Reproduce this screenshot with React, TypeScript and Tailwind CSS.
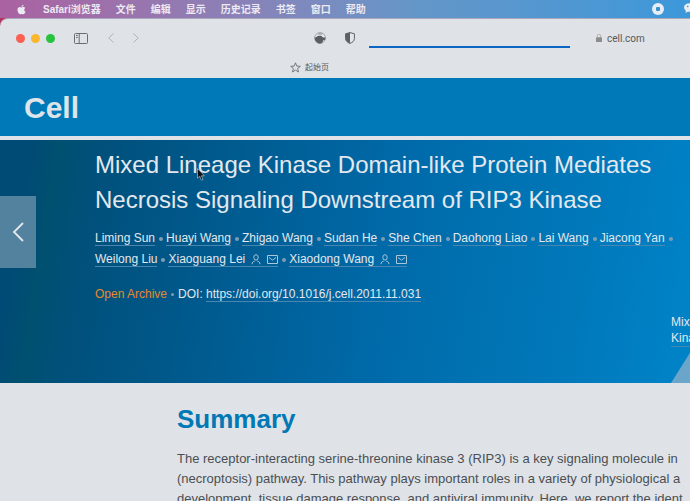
import { FaApple } from 'react-icons/fa';

interface Author {
  name: string;
  corresponding?: boolean;
}

const menus = ['文件', '编辑', '显示', '历史记录', '书签', '窗口', '帮助'];

const firstRow: Author[] = [
  { name: 'Liming Sun' },
  { name: 'Huayi Wang' },
  { name: 'Zhigao Wang' },
  { name: 'Sudan He' },
  { name: 'She Chen' },
  { name: 'Daohong Liao' },
  { name: 'Lai Wang' },
  { name: 'Jiacong Yan' },
];

const secondRow: Author[] = [
  { name: 'Weilong Liu' },
  { name: 'Xiaoguang Lei', corresponding: true },
  { name: 'Xiaodong Wang', corresponding: true },
];

function Dot() {
  return <span className="size-1 shrink-0 rounded-full bg-[#7d9db4]" />;
}

function PersonIcon() {
  return (
    <svg viewBox="0 0 10 11" className="h-[11px] w-[10px]" fill="none" stroke="#a9c6da" strokeWidth="1">
      <ellipse cx="5" cy="3.4" rx="2.2" ry="2.7" />
      <path d="M1 10.2c.1-2 1.2-2.7 2.8-3.2M9 10.2c-.1-2-1.2-2.7-2.8-3.2" />
    </svg>
  );
}

function MailIcon() {
  return (
    <svg viewBox="0 0 11 9" className="h-[9px] w-[11px]" fill="none" stroke="#a9c6da" strokeWidth="1">
      <path d="M.5.5h10v8H.5zM2 2.5l3.5 2.6L9 2.5" />
    </svg>
  );
}

function AuthorLink({ author }: { author: Author }) {
  return (
    <a href="#author" className="flex h-[15px] items-center gap-[6px] border-b border-[#4686b0] whitespace-nowrap">
      {author.name}
      {author.corresponding && (
        <>
          <PersonIcon />
          <MailIcon />
        </>
      )}
    </a>
  );
}

function MenuBar() {
  return (
    <nav className="flex h-[18px] items-center bg-linear-to-r from-[#aa61a1] via-[#6496c8] via-60% to-[#3b98da] pl-4 text-[10px] font-bold text-[#eceaf3]">
      <FaApple className="mr-4 size-[11px] shrink-0" />
      <button className="mr-[15px] shrink-0">Safari浏览器</button>
      <div className="flex shrink-0 gap-[15px]">
        {menus.map((m) => (
          <button key={m} className="whitespace-nowrap">{m}</button>
        ))}
      </div>
      <div className="ml-auto -mr-2 flex shrink-0 items-center gap-5">
        <svg viewBox="0 0 12 12" className="size-3">
          <circle cx="6" cy="6" r="6" fill="#e8edf3" />
          <rect x="4" y="4" width="4" height="4" rx="1" fill="#3392cc" />
        </svg>
        <svg viewBox="0 0 14 12" className="h-3 w-[14px]" fill="#e8edf3">
          <ellipse cx="5.5" cy="4.5" rx="5.5" ry="4.2" />
          <path d="M2 7l-.5 3L5 8z" />
          <ellipse cx="10" cy="7.5" rx="4" ry="3.3" />
          <circle cx="3.7" cy="3.5" r=".8" fill="#3392cc" />
          <circle cx="7.2" cy="3.5" r=".8" fill="#3392cc" />
        </svg>
      </div>
    </nav>
  );
}

function Toolbar() {
  return (
    <div className="bg-linear-to-r from-[#b5345f] from-2% via-[#c0798e] via-30% to-[#5ba3c4]">
      <div className="rounded-tl-lg border-t border-[#a9a6bd] bg-[#dfe2e7] text-[#55595d]">
        <div className="flex h-[38px] items-center pl-4">
          <div className="flex gap-[6px]">
            <span className="size-[9px] rounded-full bg-[#fa6152]" />
            <span className="size-[9px] rounded-full bg-[#fbb62e]" />
            <span className="size-[9px] rounded-full bg-[#27c33f]" />
          </div>
          <button aria-label="Sidebar" className="ml-[19px]">
            <svg viewBox="0 0 14 11" className="h-[11px] w-[14px]" fill="none" stroke="#696d72" strokeWidth="1">
              <rect x=".5" y=".5" width="13" height="10" rx="1" />
              <path d="M5.2.5v10M2 2.5h1.7M2 4.5h1.7" />
            </svg>
          </button>
          <button aria-label="Back" className="ml-5">
            <svg viewBox="0 0 6 10" className="h-[10px] w-[6px]" fill="none" stroke="#afb2b6">
              <path d="M5.5.5L.8 5l4.7 4.5" />
            </svg>
          </button>
          <button aria-label="Forward" className="ml-[19px]">
            <svg viewBox="0 0 6 10" className="h-[10px] w-[6px]" fill="none" stroke="#afb2b6">
              <path d="M.5.5L5.2 5 .5 9.5" />
            </svg>
          </button>
          <button aria-label="Extension" className="ml-[175px]">
            <svg viewBox="0 0 12 12" className="size-3">
              <circle cx="6" cy="6" r="5.4" fill="#e8e9eb" stroke="#92969a" strokeWidth=".8" />
              <path d="M.8 5.5C2.2 5.6 3 4 5 3.8c1.8-.2 3 .2 3.5 1.4l3 .5c0 2.3-1.2 2.8-2.4 2.6C9 10 8 11.5 6 11.5 3 11.5.6 9 .8 5.5z" fill="#5b5e61" />
              <path d="M3 2.5L5.5 1l4 .6-2 1.2z" fill="#a2a5a9" />
            </svg>
          </button>
          <button aria-label="Privacy report" className="ml-[19px]">
            <svg viewBox="0 0 10 12" className="h-3 w-[10px]">
              <path d="M5 .6l4.4 1.2v4.7C9.4 9 7.5 10.4 5 11.4 2.5 10.4.6 9 .6 6.5V1.8z" fill="#e4e6e8" stroke="#5d6165" />
              <path d="M5 .6v10.8C2.5 10.4.6 9 .6 6.5V1.8z" fill="#5d6165" />
            </svg>
          </button>
          <div className="ml-[14px] h-5 w-[201px] shrink-0 border-b-2 border-[#0a66c2]" />
          <label className="ml-[26px] flex items-center gap-[5px] text-[10px]">
            <svg viewBox="0 0 6 8" className="h-2 w-[6px]" aria-hidden="true">
              <rect y="3.2" width="6" height="4.8" rx=".6" fill="#8c8c8d" />
              <path d="M1.3 3.5V2a1.7 1.7 0 013.4 0v1.5" fill="none" stroke="#aaa3a5" strokeWidth=".8" />
            </svg>
            <input
              aria-label="Address"
              defaultValue="cell.com"
              className="w-16 min-w-0 font-['Roboto',sans-serif] outline-none"
            />
          </label>
        </div>
        <div className="flex h-[21px] items-center justify-center pr-[71px]">
          <button className="flex items-center gap-1 text-[8px]">
            <svg viewBox="0 0 11 11" className="size-[11px]" fill="none" stroke="#6b6e72" strokeWidth=".9">
              <path d="M5.5.8l1.3 3.3 3.5.2-2.7 2.2.9 3.5-3-1.9-3 1.9.9-3.5L.7 4.3l3.5-.2z" />
            </svg>
            起始页
          </button>
        </div>
      </div>
    </div>
  );
}

function Hero() {
  return (
    <section className="relative flex h-[243px] bg-[linear-gradient(99deg,#004a76_4%,#005070_8%,#00507a_13%,#00588a_28%,#00619a_42%,#006aa9_56%,#0072b2_70%,#0079bb_83%,#0082c6_97%)] text-[#e3e8ee]">
      <button aria-label="Previous article" className="mt-14 flex h-[72px] w-9 shrink-0 items-center justify-center bg-[#53829e]">
        <svg viewBox="0 0 12 20" className="h-5 w-3" fill="none" stroke="#e3e8ee" strokeWidth="1.8">
          <path d="M11 1L2 10l9 9" />
        </svg>
      </button>
      <div className="ml-[59px] w-[576px] shrink-0 pt-[7px] text-[12px]">
        <h1 className="text-[24px] leading-[35px] whitespace-nowrap">
          Mixed Lineage Kinase Domain-like Protein Mediates
          <br />
          Necrosis Signaling Downstream of RIP3 Kinase
        </h1>
        <div className="mt-[14px] flex flex-col gap-[6px]">
          <div className="flex items-center gap-[3px]">
            {firstRow.map((a) => (
              <div key={a.name} className="flex items-center gap-1">
                <AuthorLink author={a} />
                <Dot />
              </div>
            ))}
          </div>
          <div className="flex items-center gap-1">
            {secondRow.map((a, i) => (
              <div key={a.name} className="flex items-center gap-[3px]">
                {i > 0 && <Dot />}
                <AuthorLink author={a} />
              </div>
            ))}
          </div>
        </div>
        <div className="mt-[18px] flex items-center">
          <span className="text-[#e5892c]">Open Archive</span>
          <span className="mx-1 size-[3px] rounded-full bg-[#7d9db4]" />
          <span>DOI:&nbsp;</span>
          <a href="https://doi.org/10.1016/j.cell.2011.11.031" className="flex h-[15px] items-center border-b border-[#4686b0]">
            https://doi.org/10.1016/j.cell.2011.11.031
          </a>
        </div>
      </div>
      <aside className="flex min-w-0 flex-1 flex-col justify-end overflow-hidden text-[12px] leading-4">
        <a href="#next" className="w-24 border-b border-[#4686b0]">
          Mixed Lineage Kinase
        </a>
        <svg viewBox="0 0 96 36" className="h-9 w-24" fill="#6ba5c9">
          <path d="M0 36L22 1v35z" />
          <path d="M22 1h74v35H22z" />
        </svg>
      </aside>
      <svg viewBox="0 0 8 13" className="absolute top-7 left-[197px] h-[13px] w-2" fill="#0b0f14" stroke="#c9d3da" strokeWidth=".6">
        <path d="M.5.5v9.7l2.2-2 1.6 4 1.7-.7-1.6-3.7h3z" />
      </svg>
    </section>
  );
}

export default function App() {
  return (
    <div className="min-h-screen overflow-hidden bg-[#dfe2e7] font-['Liberation_Sans','Noto_Sans_CJK_SC',sans-serif]">
      <MenuBar />
      <Toolbar />
      <header className="flex h-[58px] items-center bg-[#0079b8] pl-6">
        <a href="#cell" className="text-[30px] font-bold text-[#dfe4ea]">Cell</a>
      </header>
      <div className="h-1" />
      <Hero />
      <main className="h-[118px] overflow-hidden pl-[177px]">
        <h2 className="mt-5 text-[26px] leading-8 font-bold text-[#0079b5]">Summary</h2>
        <p className="mt-[14px] text-[13px] leading-5 whitespace-nowrap text-[#4a4f53]">
          The receptor-interacting serine-threonine kinase 3 (RIP3) is a key signaling molecule in
          <br />
          (necroptosis) pathway. This pathway plays important roles in a variety of physiological a
          <br />
          development, tissue damage response, and antiviral immunity. Here, we report the ident
        </p>
      </main>
    </div>
  );
}
